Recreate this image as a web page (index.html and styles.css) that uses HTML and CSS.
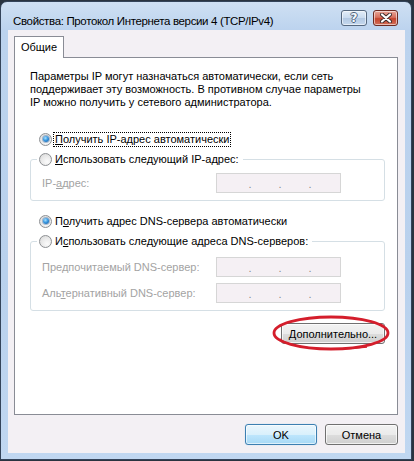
FILE: index.html
```html
<!DOCTYPE html>
<html lang="ru">
<head>
<meta charset="utf-8">
<title>Свойства: Протокол Интернета версии 4 (TCP/IPv4)</title>
<link rel="stylesheet" href="styles.css">
</head>
<body>
<div class="window">
  <div class="titlebar">
    <span class="title">Свойства: Протокол Интернета версии 4 (TCP/IPv4)</span>
    <div class="caption-buttons">
      <div class="cap help"><span class="q">?</span></div>
      <div class="cap close">
        <svg width="12" height="10" viewBox="0 0 12 10">
          <path d="M2 1.5 L10 8.5 M10 1.5 L2 8.5" stroke="#3a2a2a" stroke-width="4" stroke-linecap="round" fill="none"/>
          <path d="M2 1.5 L10 8.5 M10 1.5 L2 8.5" stroke="#ffffff" stroke-width="2.2" stroke-linecap="round" fill="none"/>
        </svg>
      </div>
    </div>
  </div>
  <div class="client">
    <div class="tabs"><div class="tab">Общие</div></div>
    <div class="panel">
      <p class="intro">Параметры IP могут назначаться автоматически, если сеть<br>поддерживает эту возможность. В противном случае параметры<br>IP можно получить у сетевого администратора.</p>

      <div class="radio-row first">
        <span class="radio checked"></span>
        <span class="label focus"><u>П</u>олучить IP-адрес автоматически</span>
      </div>

      <fieldset class="group">
        <legend><span class="radio"></span><span class="label"><u>И</u>спользовать следующий IP-адрес:</span></legend>
        <div class="field">
          <span class="flabel">IP-<u>а</u>дрес:</span>
          <div class="ipbox"><span>.</span><span>.</span><span>.</span></div>
        </div>
      </fieldset>

      <div class="radio-row second">
        <span class="radio checked"></span>
        <span class="label">П<u>о</u>лучить адрес DNS-сервера автоматически</span>
      </div>

      <fieldset class="group dns">
        <legend><span class="radio"></span><span class="label">И<u>с</u>пользовать следующие адреса DNS-серверов:</span></legend>
        <div class="field">
          <span class="flabel">Пре<u>д</u>почитаемый DNS-сервер:</span>
          <div class="ipbox"><span>.</span><span>.</span><span>.</span></div>
        </div>
        <div class="field">
          <span class="flabel">Аль<u>т</u>ернативный DNS-сервер:</span>
          <div class="ipbox"><span>.</span><span>.</span><span>.</span></div>
        </div>
      </fieldset>

      <div class="adv-row">
        <div class="adv-wrap">
          <button class="btn adv"><u>Д</u>ополнительно...</button>
          <svg class="mark" width="118" height="36" viewBox="0 0 118 36">
            <ellipse cx="59" cy="18" rx="57" ry="16" fill="none" stroke="#d41e2c" stroke-width="2.8"/>
            <path d="M8 24 C20 34 60 36 95 32" fill="none" stroke="#d41e2c" stroke-width="1.6"/>
          </svg>
        </div>
      </div>
    </div>
    <div class="actions">
      <button class="btn default">OK</button>
      <button class="btn cancel">Отмена</button>
    </div>
  </div>
</div>
</body>
</html>
```

FILE: styles.css
```css
html, body {
  margin: 0;
  padding: 0;
}
body {
  width: 414px;
  height: 461px;
  background: #2a3440;
  font-family: "Liberation Sans", Arial, sans-serif;
  font-size: 11px;
  color: #000;
  overflow: hidden;
}
.window {
  width: 412px;
  height: 459px;
  margin-top: 1px;
  box-sizing: border-box;
  border: 1px solid #34445a;
  border-radius: 7px 7px 0 0;
  background: linear-gradient(to bottom, #cfe0f3 0, #bcd3ee 28px, #b9d1ed 60%, #c0d7f1 100%);
  display: flex;
  flex-direction: column;
  padding: 0 6px 6px 7px;
}
.titlebar {
  height: 28px;
  flex: none;
  display: flex;
  align-items: flex-start;
  justify-content: space-between;
  padding: 8px 7px 0 5px;
  box-sizing: border-box;
}
.title {
  margin-top: 3px;
  line-height: 16px;
  font-size: 11.5px;
  letter-spacing: -0.35px;
  color: #000;
  white-space: nowrap;
}
.caption-buttons {
  display: flex;
  gap: 6px;
}
.cap {
  height: 16px;
  box-sizing: border-box;
  border: 1px solid #55687f;
  border-radius: 3px;
  display: flex;
  align-items: center;
  justify-content: center;
  box-shadow: inset 0 0 0 1px rgba(255,255,255,0.55);
}
.help {
  width: 26px;
  background: linear-gradient(to bottom, #e3edf8 0, #c9dbef 50%, #b2c8e2 51%, #c6d9ee 100%);
}
.help .q {
  font-family: "DejaVu Sans", sans-serif;
  font-weight: bold;
  font-size: 12px;
  line-height: 14px;
  color: #f4f8fc;
  text-shadow: 1px 0 0 #50637b, -1px 0 0 #50637b, 0 1px 0 #50637b, 0 -1px 0 #50637b;
}
.close {
  width: 25px;
  border-color: #6b2a22;
  background: linear-gradient(to bottom, #e8a597 0, #d7715f 45%, #c4432c 55%, #d2705a 100%);
}
.client {
  flex: 1;
  background: #f3f0f4;
  padding: 6px 7px 8px 6px;
  display: flex;
  flex-direction: column;
  box-sizing: border-box;
  border: 0;
}
.tabs {
  display: flex;
  flex: none;
}
.tab {
  width: 50px;
  height: 22px;
  box-sizing: border-box;
  border: 1px solid #898c95;
  border-bottom: 0;
  background: #fff;
  text-align: center;
  line-height: 20px;
  position: relative;
  z-index: 1;
  margin-bottom: -1px;
}
.panel {
  flex: 1;
  border: 1px solid #898c95;
  background: #fff;
  padding: 12px 12px 0 15px;
  display: flex;
  flex-direction: column;
}
.intro {
  margin: 0;
  line-height: 13px;
}
.radio-row {
  display: flex;
  align-items: center;
  height: 14px;
  padding-left: 9px;
}
.radio-row.first { margin-top: 23px; }
.radio-row.second { margin-top: 13px; }
.radio {
  width: 13px;
  height: 13px;
  box-sizing: border-box;
  border-radius: 50%;
  border: 1px solid #8d9093;
  background: radial-gradient(circle at 65% 70%, #fbfbfb 0, #ececec 45%, #d6d6d6 100%);
  display: flex;
  align-items: center;
  justify-content: center;
  flex: none;
}
.radio.checked::after {
  content: "";
  width: 6px;
  height: 6px;
  border-radius: 50%;
  background: radial-gradient(circle at 40% 35%, #a8e1ff 0, #3a98e0 45%, #0c4f97 100%);
  box-shadow: 0 0 0 1px rgba(30,80,140,0.35);
}
.label {
  margin-left: 2px;
  padding: 0 1px;
  line-height: 13px;
  white-space: nowrap;
}
.label.focus {
  outline: 1px dotted #000;
  outline-offset: 0;
}
.group {
  margin: 6px 0 0 0;
  border: 1px solid #d5dfe5;
  border-radius: 3px;
  padding: 7px 11px 7px 11px;
  min-width: 0;
  display: flex;
  flex-direction: column;
  gap: 6px;
}
.group.dns {
  padding-top: 9px;
}
.group legend {
  display: flex;
  align-items: center;
  height: 14px;
  padding: 0 3px 0 2px;
  margin-left: -5px;
}
.field {
  display: flex;
  align-items: center;
}
.flabel {
  width: 174px;
  flex: none;
  color: #a3a3a3;
  white-space: nowrap;
}
.ipbox {
  width: 125px;
  height: 20px;
  box-sizing: border-box;
  border: 1px solid #d6d6d6;
  background: #f5f0f4;
  display: flex;
  padding-left: 18px;
  line-height: 20px;
  color: #8a8a8a;
}
.ipbox span {
  width: 30px;
  text-align: center;
}
.adv-row {
  display: flex;
  justify-content: flex-end;
  margin-top: 12px;
}
.adv-wrap {
  position: relative;
}
.mark {
  position: absolute;
  left: -9px;
  top: -8px;
  pointer-events: none;
}
.btn {
  height: 21px;
  box-sizing: border-box;
  border: 1px solid #707070;
  border-radius: 3px;
  background: linear-gradient(to bottom, #f2f2f2 0, #ebebeb 50%, #dddddd 51%, #cfcfcf 100%);
  box-shadow: inset 0 0 0 1px rgba(255,255,255,0.7);
  font-family: "Liberation Sans", Arial, sans-serif;
  font-size: 11px;
  color: #000;
  padding: 0;
  display: block;
}
.btn.adv {
  width: 104px;
}
.actions {
  display: flex;
  justify-content: flex-end;
  gap: 8px;
  margin-top: 9px;
  flex: none;
}
.btn.default {
  width: 72px;
  border-color: #3c7fb1;
  background: linear-gradient(to bottom, #eaf6fd 0, #d9f0fc 50%, #bee6fd 51%, #a7d9f5 100%);
  box-shadow: inset 0 0 0 1px rgba(255,255,255,0.6), 0 0 1px #8fc6ec;
}
.btn.cancel {
  width: 73px;
}
```
